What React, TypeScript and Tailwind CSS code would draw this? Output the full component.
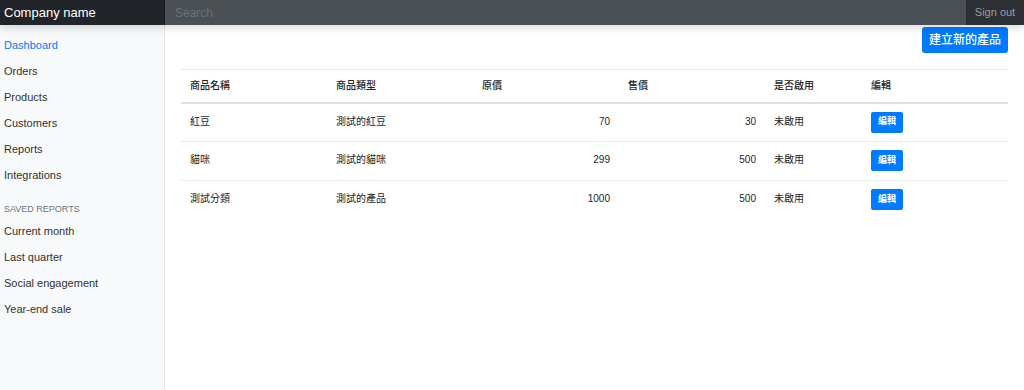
import React from "react";

const font = { fontFamily: '"Liberation Sans", "Noto Sans CJK TC", Arial, sans-serif' };

const nav = ["Dashboard", "Orders", "Products", "Customers", "Reports", "Integrations"];
const saved = ["Current month", "Last quarter", "Social engagement", "Year-end sale"];

const rows = [
  { name: "紅豆", type: "測試的紅豆", orig: "70", price: "30", on: "未啟用" },
  { name: "貓咪", type: "測試的貓咪", orig: "299", price: "500", on: "未啟用" },
  { name: "測試分類", type: "測試的產品", orig: "1000", price: "500", on: "未啟用" },
];

export default function App() {
  return (
    <div className="h-[390px] w-[1024px] flex flex-col bg-white overflow-hidden" style={font}>
      <div className="h-[25px] flex shrink-0 bg-[#343a40] shadow-[0_3px_8px_rgba(0,0,0,0.15)] relative z-10">
        <div className="w-[165px] bg-[#212428] text-white text-[13px] flex items-center pl-[4px] shadow-[inset_-1px_0_0_rgba(0,0,0,0.25)]">
          Company name
        </div>
        <div className="flex-1 bg-[#4b5055] flex items-center pl-[10px] text-[12px] text-[#6c7075]">
          Search
        </div>
        <div className="w-[58px] flex items-center justify-center text-[11px] text-[#9a9ea2] bg-[#2c3034]">
          Sign out
        </div>
      </div>
      <div className="flex flex-1 min-h-0">
        <div className="w-[165px] shrink-0 bg-[#f8f9fa] border-r border-[#e4e6e8] pt-[7px] text-[11px] text-[#333]">
          {nav.map((n, i) => (
            <div key={n} className={`h-[26px] flex items-center px-[4px] ${i === 0 ? "text-[#007bff]" : ""}`}>
              {n}
            </div>
          ))}
          <div className="h-[30px] flex items-end pb-[2px] px-[4px] text-[9px] text-[#6c757d] uppercase">Saved reports</div>
          {saved.map((n) => (
            <div key={n} className="h-[26px] flex items-center px-[4px]">
              {n}
            </div>
          ))}
        </div>
        <div className="flex-1 px-[16px]">
          <div className="flex justify-end pt-[2px]">
            <button className="h-[26px] px-[7px] bg-[#007bff] text-white text-[12px] font-medium rounded-[3px]">
              建立新的產品
            </button>
          </div>
          <table className="mt-[16px] w-full border-collapse text-[10px] text-[#212529] table-fixed">
            <colgroup>
              <col className="w-[146px]" />
              <col className="w-[146px]" />
              <col className="w-[146px]" />
              <col className="w-[146px]" />
              <col className="w-[97px]" />
              <col />
            </colgroup>
            <thead>
              <tr className="h-[33px] border-t border-[#e9ecef] border-b-2 border-b-[#dee2e6]">
                <th className="text-left font-medium px-[9px]">商品名稱</th>
                <th className="text-left font-medium px-[9px]">商品類型</th>
                <th className="text-left font-medium px-[9px]">原價</th>
                <th className="text-left font-medium px-[9px]">售價</th>
                <th className="text-left font-medium px-[9px]">是否啟用</th>
                <th className="text-left font-medium px-[9px]">編輯</th>
              </tr>
            </thead>
            <tbody>
              {rows.map((r, i) => (
                <tr key={i} className={`h-[39px] ${i < rows.length - 1 ? "border-b border-[#e9ecef]" : ""}`}>
                  <td className="px-[9px] align-top pt-[10px]">{r.name}</td>
                  <td className="px-[9px] align-top pt-[10px]">{r.type}</td>
                  <td className="px-[9px] align-top pt-[10px] text-right">{r.orig}</td>
                  <td className="px-[9px] align-top pt-[10px] text-right">{r.price}</td>
                  <td className="px-[9px] align-top pt-[10px]">{r.on}</td>
                  <td className="px-[9px] align-top pt-[8px]">
                    <button className="h-[21px] w-[32px] bg-[#007bff] text-white text-[9px] font-bold rounded-[2px]">
                      編輯
                    </button>
                  </td>
                </tr>
              ))}
            </tbody>
          </table>
        </div>
      </div>
    </div>
  );
}
